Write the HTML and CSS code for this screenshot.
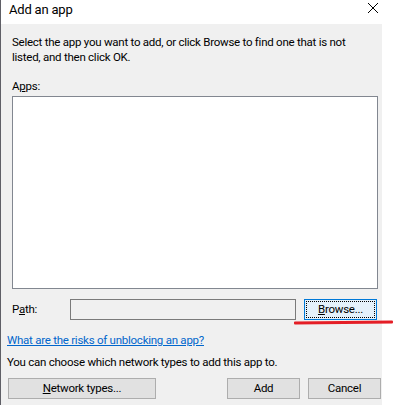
FILE: index.html
```html
<!DOCTYPE html>
<html>
<head>
<meta charset="utf-8">
<link rel="stylesheet" href="styles.css">
</head>
<body>
<div class="window">
  <div class="titlebar">
    <span class="title">Add an app</span>
    <svg class="close" width="12" height="12" viewBox="0 0 12 12"><path d="M1 1 L11 11 M11 1 L1 11" stroke="#000" stroke-width="1" fill="none"/></svg>
  </div>
  <div class="content">
    <p class="intro">Select the app you want to add, or click Browse to find one that is not listed, and then click OK.</p>
    <div class="label apps-label">A<u>p</u>ps:</div>
    <div class="listbox"></div>
    <div class="path-row">
      <span class="label path-label">P<u>a</u>th:</span>
      <div class="textbox"></div>
      <button class="btn browse"><span class="focus"><u>B</u>rowse...</span></button>
    </div>
    <a class="link" href="#">What are the risks of unblocking an app?</a>
    <p class="note">You can choose which network types to add this app to.</p>
    <div class="button-row">
      <button class="btn network"><u>N</u>etwork types...</button>
      <div class="spacer"></div>
      <button class="btn add">Add</button>
      <button class="btn cancel">Cancel</button>
    </div>
  </div>
  <div class="annotation"></div>
</div>
</body>
</html>
```
FILE: styles.css
```css
html, body {
  margin: 0;
  padding: 0;
  background: #fff;
}
body {
  width: 394px;
  height: 405px;
  overflow: hidden;
  font-family: Roboto, "Noto Sans", sans-serif;
  font-size: 11.5px;
  letter-spacing: -0.25px;
  color: #000;
}
.window {
  position: relative;
  width: 394px;
  height: 405px;
  border-left: 1px solid #5f5f66;
  box-sizing: border-box;
}
.titlebar {
  height: 24px;
  display: flex;
  align-items: center;
  background: #fff;
  padding-left: 8px;
}
.title {
  font-size: 13px;
  letter-spacing: -0.2px;
  flex: 1;
  line-height: 18px;
  margin-top: -5px;
}
.close {
  margin-right: 15px;
  margin-top: -8px;
}
.content {
  width: 381px;
  height: 381px;
  background: #f0f0f0;
  box-sizing: border-box;
  padding: 0 4px 0 6px;
  display: flex;
  flex-direction: column;
  align-items: flex-start;
}
.intro {
  margin: 11px 0 0 5px;
  line-height: 15px;
  width: 362px;
}
.label {
  line-height: 15px;
}
.apps-label {
  margin: 14px 0 0 5px;
}
.listbox {
  margin: 2px 0 0 5px;
  width: 366px;
  height: 193px;
  box-sizing: border-box;
  background: #fff;
  border: 1px solid #828790;
}
.path-row {
  margin-top: 10px;
  display: flex;
  align-items: center;
  width: 371px;
}
.path-label {
  margin-left: 5px;
  width: 58px;
  flex: none;
}
.textbox {
  width: 226px;
  height: 21px;
  flex: none;
  box-sizing: border-box;
  border: 1px solid #7a7a7a;
  background: #f0f0f0;
}
.btn {
  font-family: inherit;
  font-size: 11.5px;
  letter-spacing: -0.25px;
  color: #000;
  background: #e1e1e1;
  border: 1px solid #adadad;
  height: 21px;
  padding: 0;
  box-sizing: border-box;
  line-height: 17px;
}
.browse {
  margin-left: 8px;
  width: 73px;
  flex: none;
  background: #e5f1fb;
  border-color: #0078d7;
  padding: 1px;
  display: flex;
}
.focus {
  flex: 1;
  border: 1px dotted #000;
  line-height: 15px;
}
.link {
  margin: 13px 0 0 0;
  color: #0066cc;
  line-height: 15px;
  text-decoration: underline;
}
.note {
  margin: 7px 0 0 0;
  line-height: 15px;
}
.button-row {
  margin-top: 8px;
  display: flex;
  width: 373px;
  margin-left: 1px;
}
.network {
  width: 148px;
}
.spacer {
  flex: 1;
}
.add {
  width: 73px;
}
.cancel {
  width: 73px;
  margin-left: 8px;
}
.annotation {
  position: absolute;
  left: 293px;
  top: 321px;
  width: 99px;
  height: 3px;
  background: #e41e26;
  transform: rotate(-0.6deg);
  border-radius: 1px;
}
```
